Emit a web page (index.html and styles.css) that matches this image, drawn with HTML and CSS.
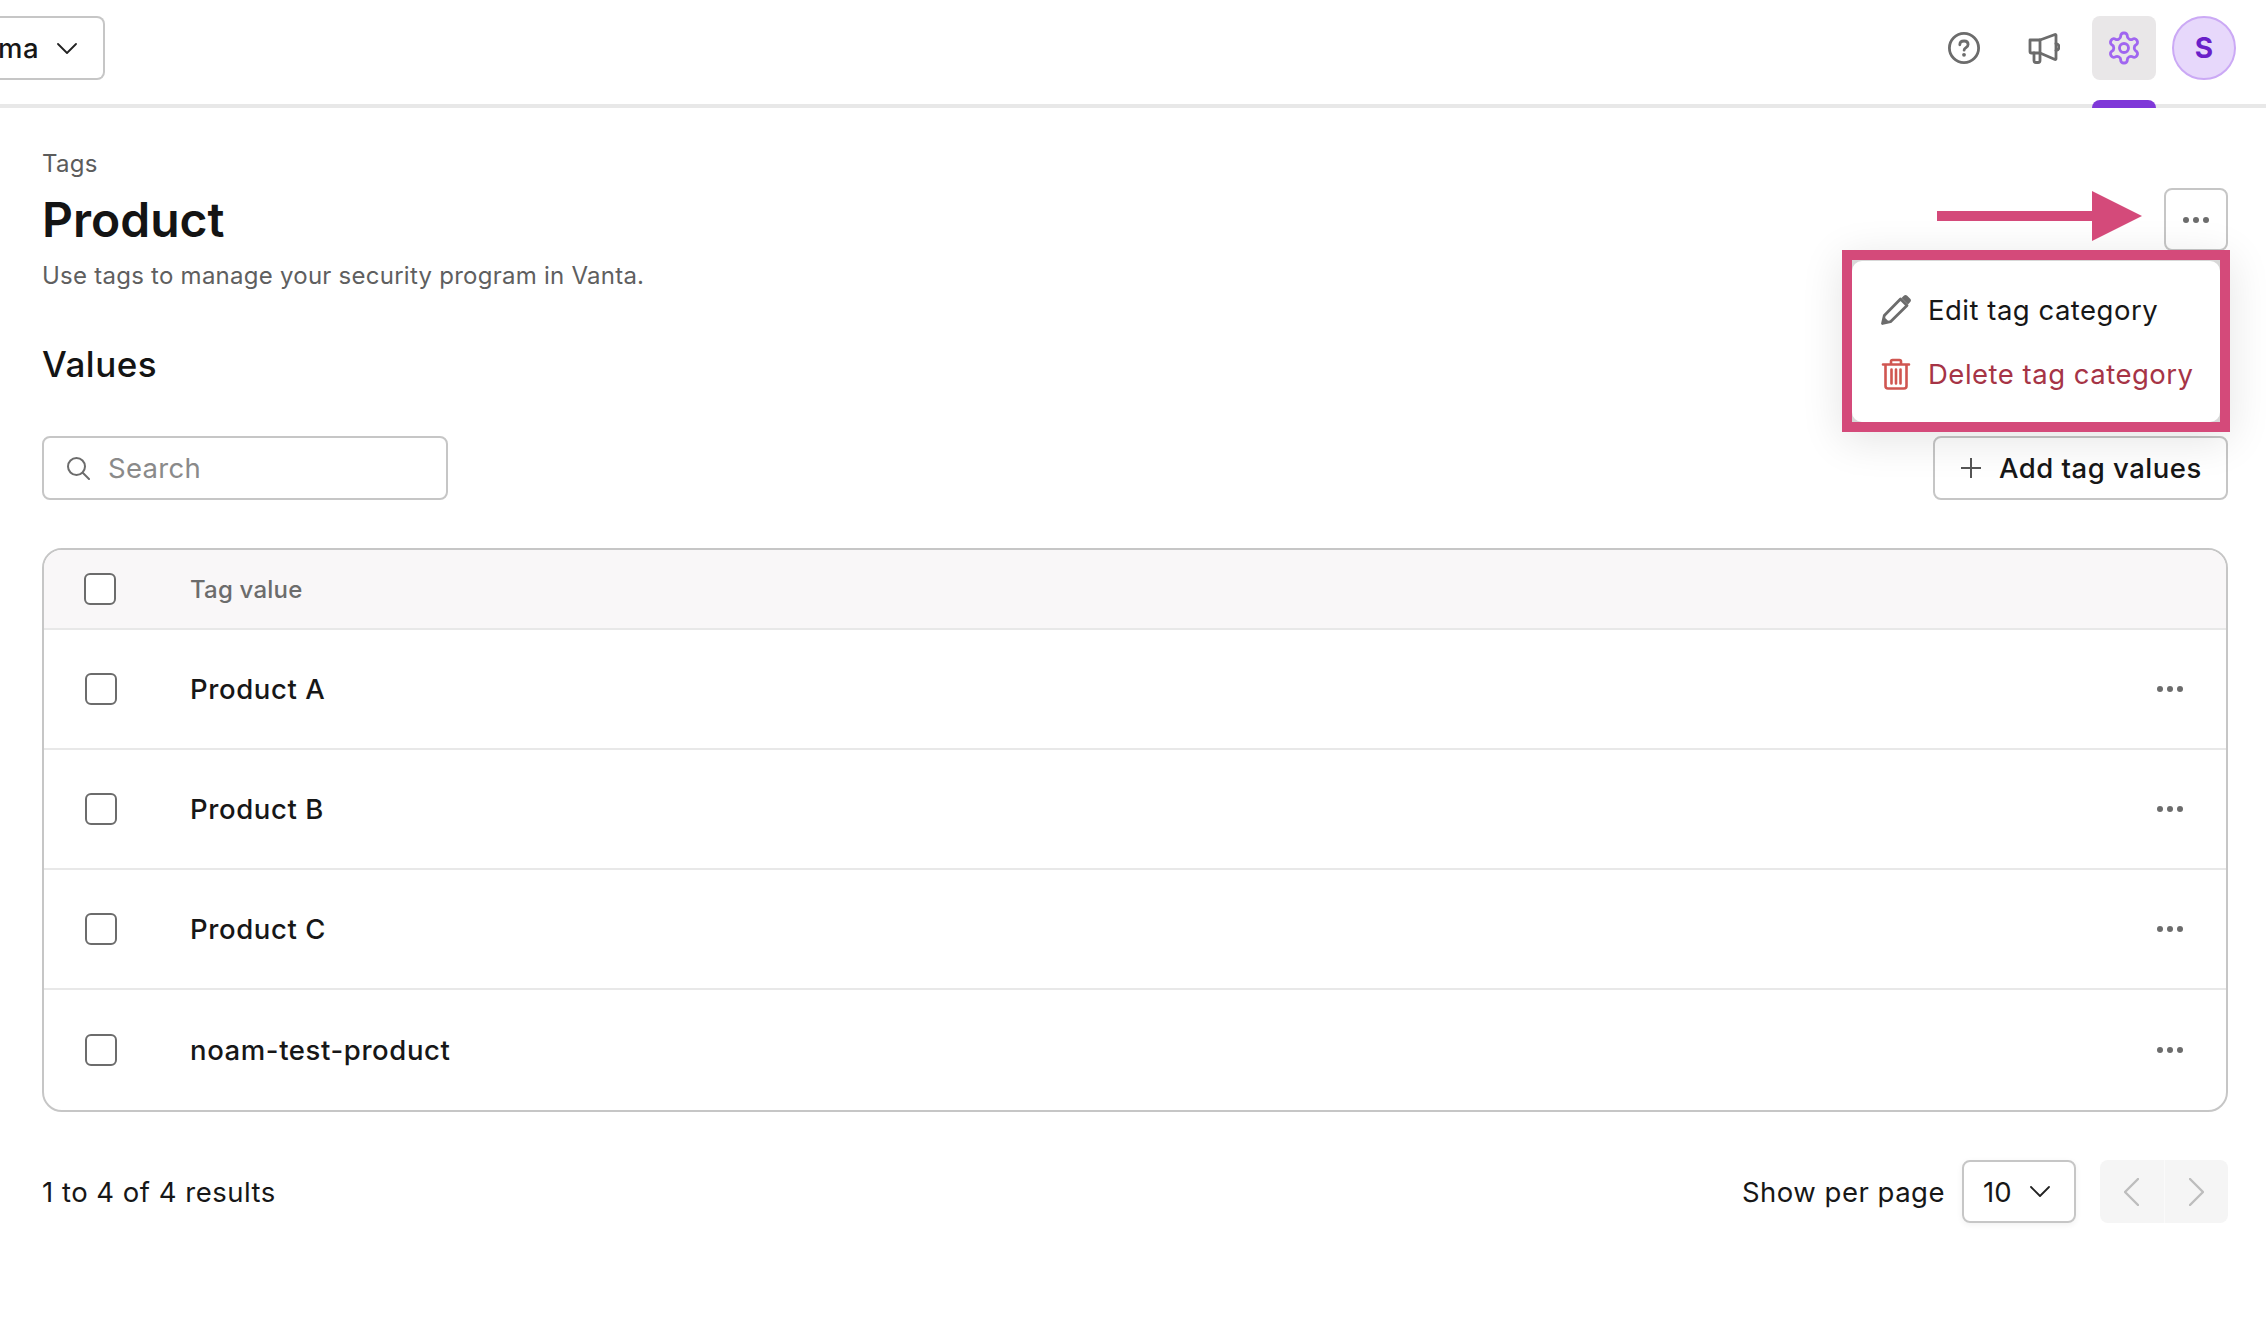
FILE: index.html
```html
<!DOCTYPE html>
<html lang="en">
<head>
<meta charset="utf-8">
<title>Tags – Product</title>
<link rel="stylesheet" href="styles.css">
</head>
<body>
<header class="topbar">
  <div class="org-select">
    <span>ma</span>
    <svg class="chev" viewBox="0 0 20 11"><path d="M1 1l9 9 9-9"/></svg>
  </div>
  <nav class="top-actions">
    <button class="top-btn">
      <svg class="ico-help" viewBox="0 0 32 32"><circle cx="16" cy="16" r="14.6"/><path d="M11.800 12.800c0-2.400 1.900-3.800 4.300-3.800s4 1.400 4 3.500c0 3.100-4 3-4 5.700"/><circle class="dot" cx="16" cy="22.800" r="1.900"/></svg>
    </button>
    <button class="top-btn">
      <svg class="ico-mega" viewBox="0 0 32 32"><path d="M2 8h10L27 2.500c.6-.2 1 .1 1 .7v23.600c0 .6-.4.9-1 .7L12 21H3.500A1.500 1.500 0 0 1 2 19.500z"/><path d="M12 8v13M6 21v7.500a2 2 0 0 0 2 2h2a2 2 0 0 0 2-2V21M28 11.500c2 .5 3 1.800 3 3.500s-1 3-3 3.500"/></svg>
    </button>
    <button class="top-btn active">
      <svg class="ico-gear" viewBox="0 0 24 24"><path d="M12.220 2h-.44a2 2 0 0 0-2 2v.18a2 2 0 0 1-1 1.730l-.43.250a2 2 0 0 1-2 0l-.15-.08a2 2 0 0 0-2.730.730l-.22.380a2 2 0 0 0 .730 2.730l.15.100a2 2 0 0 1 1 1.720v.510a2 2 0 0 1-1 1.740l-.15.090a2 2 0 0 0-.730 2.730l.22.380a2 2 0 0 0 2.730.730l.15-.08a2 2 0 0 1 2 0l.43.250a2 2 0 0 1 1 1.730V20a2 2 0 0 0 2 2h.44a2 2 0 0 0 2-2v-.18a2 2 0 0 1 1-1.730l.43-.25a2 2 0 0 1 2 0l.15.08a2 2 0 0 0 2.730-.73l.22-.39a2 2 0 0 0-.73-2.730l-.15-.08a2 2 0 0 1-1-1.740v-.5a2 2 0 0 1 1-1.740l.15-.09a2 2 0 0 0 .73-2.730l-.22-.38a2 2 0 0 0-2.730-.73l-.15.08a2 2 0 0 1-2 0l-.43-.25a2 2 0 0 1-1-1.730V4a2 2 0 0 0-2-2z"/><circle cx="12" cy="12" r="3"/></svg>
      <span class="indicator"></span>
    </button>
    <div class="avatar">S</div>
  </nav>
</header>

<main class="main">
  <section class="head">
    <div class="titles">
      <div class="crumb">Tags</div>
      <h1>Product</h1>
      <p class="desc">Use tags to manage your security program in Vanta.</p>
    </div>
    <div class="more-wrap">
      <svg class="arrow" viewBox="0 0 205 50"><path d="M0 20h155V0l50 25-50 25V30H0z"/></svg>
      <button class="more"><span class="dots"><i></i><i></i><i></i></span></button>
      <div class="callout">
        <div class="menu">
          <div class="menu-item">
            <svg class="ico-pen" viewBox="0 0 32 32"><path d="M2.500 29.500l1.800-8L20.500 5l6.500 6.500L10.500 27.700z"/><path class="fill" d="M21.500 4l2.300-2.300c1-1 2.400-1 3.400 0l3 3c1 1 1 2.400 0 3.400L28 10.500z"/><path class="fill" d="M2 30l1.700-7.500 5.800 5.800z"/></svg>
            <span>Edit tag category</span>
          </div>
          <div class="menu-item danger">
            <svg class="ico-trash" viewBox="0 0 32 32"><path d="M3 6.500h26M11 6V3.500C11 2.600 11.700 2 12.500 2h7c.8 0 1.500.6 1.500 1.500V6M5.500 6.500v21.500c0 1.500 1 2.500 2.500 2.500h16c1.500 0 2.500-1 2.500-2.500V6.500M11.500 11.500v14M16 11.500v14M20.500 11.500v14"/></svg>
            <span>Delete tag category</span>
          </div>
        </div>
      </div>
    </div>
  </section>

  <h2>Values</h2>

  <section class="toolbar">
    <label class="search">
      <svg class="ico-search" viewBox="0 0 24 24"><circle cx="10.500" cy="10.500" r="8.500"/><path d="M17 17l6 6"/></svg>
      <span>Search</span>
    </label>
    <button class="add">
      <svg class="ico-plus" viewBox="0 0 20 20"><path d="M10 0v20M0 10h20"/></svg>
      <span>Add tag values</span>
    </button>
  </section>

  <section class="table">
    <div class="thead">
      <span class="check"></span>
      <span class="th">Tag value</span>
    </div>
    <div class="row">
      <span class="check"></span>
      <span class="cell">Product A</span>
      <span class="dots"><i></i><i></i><i></i></span>
    </div>
    <div class="row">
      <span class="check"></span>
      <span class="cell">Product B</span>
      <span class="dots"><i></i><i></i><i></i></span>
    </div>
    <div class="row">
      <span class="check"></span>
      <span class="cell">Product C</span>
      <span class="dots"><i></i><i></i><i></i></span>
    </div>
    <div class="row">
      <span class="check"></span>
      <span class="cell">noam-test-product</span>
      <span class="dots"><i></i><i></i><i></i></span>
    </div>
  </section>

  <footer class="foot">
    <span>1 to 4 of 4 results</span>
    <div class="foot-right">
      <span>Show per page</span>
      <div class="per-page">
        <span>10</span>
        <svg class="chev" viewBox="0 0 20 11"><path d="M1 1l9 9 9-9"/></svg>
      </div>
      <div class="pager">
        <button class="page-btn"><svg viewBox="0 0 15 28"><path d="M14 1L1 14l13 13"/></svg></button>
        <button class="page-btn"><svg viewBox="0 0 15 28"><path d="M1 1l13 13L1 27"/></svg></button>
      </div>
    </div>
  </footer>
</main>
</body>
</html>
```
FILE: styles.css
```css
* { box-sizing: border-box; }
html, body { margin: 0; padding: 0; background: #fff; }
body {
  font-family: Inter, "Liberation Sans", sans-serif;
  color: #171717;
  font-size: 27.5px;
  line-height: 32px;
  letter-spacing: .5px;
  overflow: hidden;
  height: 1328px;
}
button { font: inherit; letter-spacing: inherit; color: inherit; background: none; border: 0; padding: 0; }
svg { display: block; fill: none; stroke-linecap: round; stroke-linejoin: round; }

.topbar {
  height: 108px;
  border-bottom: 4px solid #e8e8e8;
  display: flex;
  justify-content: space-between;
  align-items: flex-start;
  padding: 16px 30px 0 0;
}
.org-select {
  width: 105px;
  height: 64px;
  border: 2px solid #c6c6c6;
  border-left: 0;
  border-radius: 0 8px 8px 0;
  display: flex;
  align-items: center;
  justify-content: flex-end;
  gap: 18px;
  padding-right: 26px;
  font-weight: 500;
  overflow: hidden;
  flex: none;
}
.chev { width: 20px; height: 11px; stroke: #222; stroke-width: 1.8; flex: none; }

.top-actions { display: flex; gap: 16px; }
.top-btn {
  width: 64px; height: 64px;
  border-radius: 8px;
  display: flex; align-items: center; justify-content: center;
  position: relative;
}
.top-btn.active { background: #e9e7e8; }
.ico-help { width: 32px; height: 32px; stroke: #6c6c6c; stroke-width: 2.8; }
.ico-help .dot { fill: #6c6c6c; stroke: none; }
.ico-mega { width: 32px; height: 32px; stroke: #6c6c6c; stroke-width: 2.8; }
.ico-gear { width: 36px; height: 36px; stroke: #a066f0; stroke-width: 1.9; }
.indicator {
  position: absolute;
  left: 0; top: 84px;
  width: 64px; height: 8px;
  background: #7f38d8;
  border-radius: 8px 8px 0 0;
}
.avatar {
  width: 64px; height: 64px;
  border-radius: 50%;
  background: #e7d8fb;
  border: 2px solid #cba9f5;
  color: #6a1fc9;
  font-weight: 700;
  font-size: 28px;
  letter-spacing: 0;
  display: flex; align-items: center; justify-content: center;
}

.main { padding: 0 38px 0 42px; }
.head {
  display: flex;
  justify-content: space-between;
  align-items: flex-start;
  padding-top: 41px;
}
.crumb { font-size: 24px; line-height: 29px; letter-spacing: .25px; color: #5c5c5c; }
h1 { margin: 14px 0 0; font-size: 48px; line-height: 56px; font-weight: 600; letter-spacing: 0; color: #141414; }
.desc { margin: 14px 0 0; font-size: 24px; line-height: 28px; color: #5f5f5f; letter-spacing: .25px; }
h2 { margin: 54px 0 0; font-size: 35px; line-height: 40px; font-weight: 500; letter-spacing: .5px; color: #141414; }

.more-wrap { position: relative; margin-top: 39px; width: 64px; height: 63px; }
.more {
  width: 64px; height: 63px;
  border: 2px solid #c6c6c6; border-radius: 8px;
  display: flex; align-items: center; justify-content: center;
}
.dots { display: flex; gap: 4px; }
.dots i { width: 6px; height: 6px; border-radius: 50%; background: #6c6c6c; display: block; }
.arrow { position: absolute; right: 86px; top: 3px; width: 205px; height: 50px; z-index: 3; }
.arrow path { fill: #d44a7a; }
.callout {
  position: absolute;
  top: 62px; right: -2px;
  width: 388px; height: 182px;
  border: 10px solid #d44a7a;
  background: #d8d8d8;
  box-shadow: 0 8px 40px rgba(0, 0, 0, .11);
  z-index: 2;
}
.menu {
  height: 161px;
  margin-top: 1px;
  background: #fff;
  border-radius: 10px;
  padding-top: 17px;
}
.menu-item {
  height: 64px;
  padding-left: 28px;
  display: flex; align-items: center; gap: 16px;
  white-space: nowrap;
}
.menu-item.danger { color: #a63446; }
.ico-pen { width: 32px; height: 32px; stroke: #6c6c6c; stroke-width: 2.800; }
.ico-pen .fill { fill: #6c6c6c; stroke: none; }
.ico-trash { width: 32px; height: 32px; stroke: #d05651; stroke-width: 2.600; }

.toolbar {
  display: flex; justify-content: space-between;
  margin-top: 52px;
}
.search {
  width: 406px; height: 64px;
  border: 2px solid #c6c6c6; border-radius: 8px;
  display: flex; align-items: center;
  padding-left: 22px; gap: 18px;
  color: #8a8a8a;
  letter-spacing: .3px;
}
.ico-search { width: 24px; height: 24px; stroke: #6c6c6c; stroke-width: 2; }
.add {
  width: 295px; height: 64px;
  border: 2px solid #c6c6c6; border-radius: 8px;
  display: flex; align-items: center;
  padding-left: 26px; gap: 18px;
  font-weight: 500;
}
.ico-plus { width: 20px; height: 20px; stroke: #555; stroke-width: 2; }

.table {
  margin-top: 48px;
  border: 2px solid #c6c6c6;
  border-radius: 20px;
  overflow: hidden;
}
.thead {
  height: 80px;
  background: #f9f7f8;
  border-bottom: 2px solid #e8e8e8;
  display: flex; align-items: center;
  padding-left: 40px; gap: 74px;
}
.th { font-size: 24px; color: #6c6c6c; font-weight: 500; letter-spacing: .2px; padding-top: 2px; }
.row {
  height: 120px;
  border-bottom: 2px solid #e8e8e8;
  display: flex; align-items: center;
  padding: 0 43px 0 41px; gap: 73px;
}
.row:last-child { border-bottom: 0; }
.cell { flex: 1; font-weight: 500; letter-spacing: .6px; }
.check {
  width: 32px; height: 32px;
  border: 2px solid #6c6c6c; border-radius: 6px;
  background: #fff; flex: none;
}

.foot {
  margin-top: 48px;
  height: 63px;
  display: flex; justify-content: space-between; align-items: center;
}
.foot-right { display: flex; align-items: center; }
.per-page {
  width: 114px; height: 63px;
  margin-left: 17px;
  border: 2px solid #c6c6c6; border-radius: 8px;
  display: flex; align-items: center;
  padding-left: 19px; gap: 18px;
  letter-spacing: 0;
  box-shadow: 0 2px 6px rgba(0, 0, 0, .06);
}
.pager {
  margin-left: 24px;
  width: 128px; height: 63px;
  background: #f5f5f5;
  border-radius: 8px;
  display: flex;
}
.page-btn {
  flex: 1;
  display: flex; align-items: center; justify-content: center;
}
.page-btn + .page-btn { border-left: 1px solid #fafafa; }
.page-btn svg { width: 15px; height: 28px; stroke: #bdbdbd; stroke-width: 2.4; }
```
